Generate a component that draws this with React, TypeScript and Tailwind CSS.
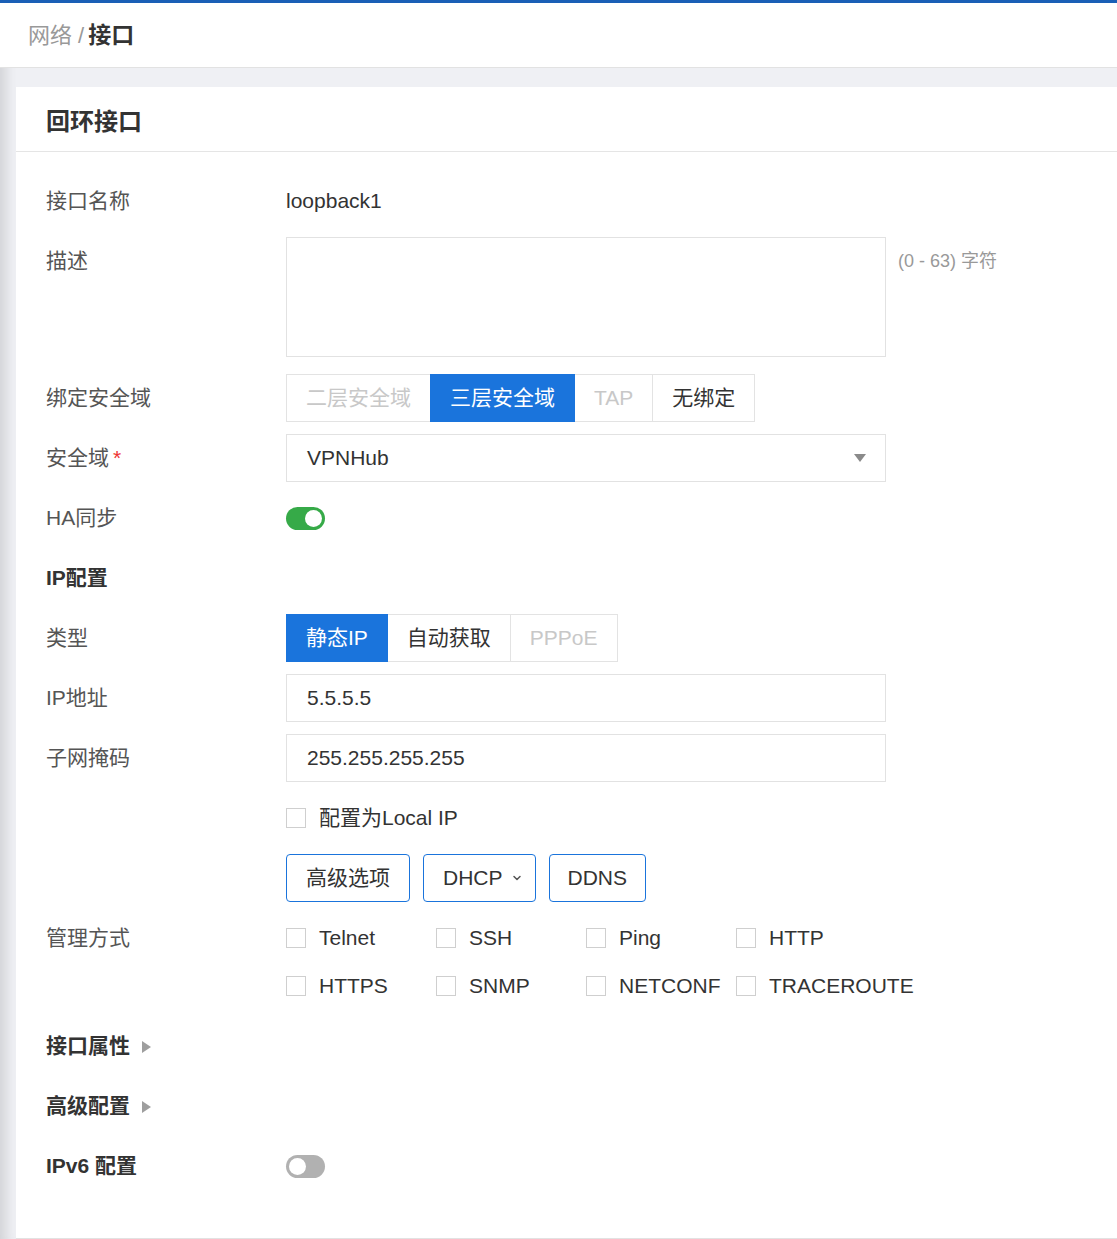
import { ChevronDown } from "lucide-react"

const font = "font-['Liberation_Sans','Noto_Sans_CJK_SC',sans-serif]"

function Row({ label, children, required, bold, h = "h-12" }: { label: React.ReactNode; children?: React.ReactNode; required?: boolean; bold?: boolean; h?: string }) {
  return (
    <div className={`flex ${h}`}>
      <div className={`w-[240px] shrink-0 leading-[48px] text-[21px] ${bold ? "font-bold text-[#333]" : "text-[#555]"}`}>
        {label}
        {required && <span className="ml-1 text-[#e33]">*</span>}
      </div>
      <div className="flex flex-1 items-start">{children}</div>
    </div>
  )
}

function Segmented({ items, active, disabled }: { items: string[]; active: number; disabled: number[] }) {
  return (
    <div className="flex h-12">
      {items.map((it, i) => (
        <div
          key={it}
          className={`flex items-center px-[19px] text-[21px] border -ml-px first:ml-0 ${
            i === active
              ? "bg-[#1a74dc] border-[#1a74dc] text-white relative"
              : disabled.includes(i)
              ? "border-[#e3e3e3] text-[#c8c8c8] bg-white"
              : "border-[#e3e3e3] text-[#333] bg-white"
          } ${it === "TAP" ? "text-[20px]" : ""}`}
        >
          {it}
        </div>
      ))}
    </div>
  )
}

function Check({ label }: { label: string }) {
  return (
    <div className="flex h-12 items-center gap-[13px]">
      <span className="h-5 w-5 border border-[#cfcfcf] bg-white" />
      <span className="text-[21px] text-[#333]">{label}</span>
    </div>
  )
}

function Toggle({ on }: { on: boolean }) {
  return (
    <div className={`mt-[13px] flex h-[23px] w-[39px] items-center rounded-full px-[3px] ${on ? "justify-end bg-[#36aa48]" : "justify-start bg-[#b1b1b1]"}`}>
      <span className="h-[17px] w-[17px] rounded-full bg-white" />
    </div>
  )
}

function Caret() {
  return <span className="ml-3 inline-block h-0 w-0 border-y-[6px] border-l-[9px] border-y-transparent border-l-[#9e9e9e] align-middle" />
}

export default function App() {
  return (
    <div className={`${font} min-h-[1239px] bg-[#eff0f4] shadow-[inset_14px_0_12px_-8px_rgba(0,0,0,0.12)]`}>
      <div className="h-[3px] bg-[#1a5fb6]" />
      <div className="flex h-[65px] items-center border-b border-[#e2e2e2] bg-white pl-[28px] pt-px text-[22px]">
        <span className="text-[#999]">网络 / </span>
        <span className="ml-1 text-[23px] font-bold text-[#333]">接口</span>
      </div>
      <div className="ml-4 mt-[19px] border-b border-[#e2e2e2] bg-white">
        <div className="flex h-[65px] items-center border-b border-[#e5e5e5] pl-[30px] pt-[5px] text-[24px] font-bold text-[#333]">回环接口</div>
        <div className="flex flex-col gap-3 px-[30px] pb-12 pt-[25px]">
          <Row label="接口名称">
            <span className="text-[21px] leading-[48px] text-[#333]">loopback1</span>
          </Row>
          <Row label="描述" h="h-[125px]">
            <div className="h-[120px] w-[600px] border border-[#e2e2e2]" />
            <span className="ml-3 text-[18px] leading-[48px] text-[#999]">(0 - 63) 字符</span>
          </Row>
          <Row label="绑定安全域">
            <Segmented items={["二层安全域", "三层安全域", "TAP", "无绑定"]} active={1} disabled={[0, 2]} />
          </Row>
          <Row label="安全域" required>
            <div className="flex h-12 w-[600px] items-center justify-between border border-[#e2e2e2] pl-5 pr-[19px] text-[21px] text-[#333]">
              VPNHub
              <span className="h-0 w-0 border-x-[6px] border-t-[8px] border-x-transparent border-t-[#8a8a8a]" />
            </div>
          </Row>
          <Row label="HA同步">
            <Toggle on />
          </Row>
          <Row label="IP配置" bold />
          <Row label="类型">
            <Segmented items={["静态IP", "自动获取", "PPPoE"]} active={0} disabled={[2]} />
          </Row>
          <Row label="IP地址">
            <div className="flex h-12 w-[600px] items-center border border-[#e2e2e2] pl-5 text-[21px] text-[#333]">5.5.5.5</div>
          </Row>
          <Row label="子网掩码">
            <div className="flex h-12 w-[600px] items-center border border-[#e2e2e2] pl-5 text-[21px] text-[#333]">255.255.255.255</div>
          </Row>
          <Row label="">
            <Check label="配置为Local IP" />
          </Row>
          <Row label="">
            <div className="flex gap-[13px]">
              <div className="flex h-12 items-center rounded-[4px] border border-[#1a74dc] px-[19px] text-[21px] text-[#333]">高级选项</div>
              <div className="flex h-12 items-center gap-2 rounded-[4px] border border-[#1a74dc] pl-[19px] pr-3 text-[21px] text-[#333]">
                DHCP
                <ChevronDown className="h-3 w-3 text-[#555]" strokeWidth={3} />
              </div>
              <div className="flex h-12 items-center rounded-[4px] border border-[#1a74dc] px-[18px] text-[21px] text-[#333]">DDNS</div>
            </div>
          </Row>
          <Row label="管理方式" h="h-24">
            <div className="grid grid-cols-[150px_150px_150px_190px]">
              {["Telnet", "SSH", "Ping", "HTTP", "HTTPS", "SNMP", "NETCONF", "TRACEROUTE"].map((c) => (
                <Check key={c} label={c} />
              ))}
            </div>
          </Row>
          <Row label={<>接口属性<Caret /></>} bold />
          <Row label={<>高级配置<Caret /></>} bold />
          <Row label="IPv6 配置" bold>
            <Toggle on={false} />
          </Row>
        </div>
      </div>
    </div>
  )
}
